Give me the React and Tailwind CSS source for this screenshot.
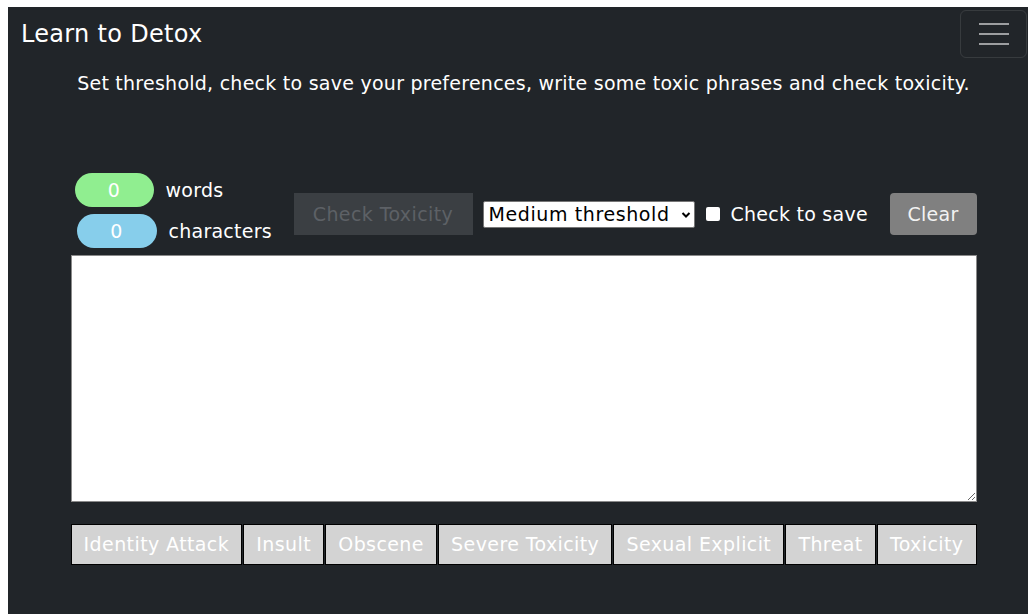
import { useState } from 'react';

// Detox trainer: navbar, counters + controls row, text area and the
// category tags underneath.

const CATEGORIES = [
  'Identity Attack',
  'Insult',
  'Obscene',
  'Severe Toxicity',
  'Sexual Explicit',
  'Threat',
  'Toxicity',
];

export default function App() {
  const [text, setText] = useState('');
  const [threshold, setThreshold] = useState('medium');
  const [save, setSave] = useState(false);

  const words = text.trim() ? text.trim().split(/\s+/).length : 0;

  return (
    <div className="h-[614px] w-[1028px] overflow-hidden bg-white pl-[8px] pt-[7px]">
      <div
        className="h-[700px] w-[1031px] bg-[#212529] tracking-[0.25px] text-white"
        style={{ fontFamily: '"DejaVu Sans", "Open Sans", sans-serif' }}
      >
        <nav className="flex items-center justify-between py-[3px] pl-[13px] pr-[12px]">
          <span className="text-[24px] leading-[32px] tracking-[0.3px]">Learn to Detox</span>
          <button className="flex h-[48px] w-[67px] items-center justify-center rounded-[6px] border border-white/10">
            <svg width="30" height="22" viewBox="0 0 30 22">
              <path d="M0 1h30M0 11h30M0 21h30" stroke="#9c9ea0" strokeWidth="2" />
            </svg>
          </button>
        </nav>

        <p className="mt-[9px] text-center text-[19px] leading-[27px]">
          Set threshold, check to save your preferences, write some toxic phrases and check toxicity.
        </p>

        <div className="mx-auto mt-[76px] w-[906px]">
          <div className="flex items-start">
            <div className="flex w-[223px] flex-col gap-[7px] text-[19px]">
              <div className="flex items-center">
                <span className="ml-[4px] flex h-[34px] w-[79px] items-center justify-center rounded-full bg-[#90ee90]">
                  {words}
                </span>
                <span className="ml-[12px]">words</span>
              </div>
              <div className="flex items-center">
                <span className="ml-[6px] flex h-[34px] w-[80px] items-center justify-center rounded-full bg-[#87ceeb]">
                  {text.length}
                </span>
                <span className="ml-[12px]">characters</span>
              </div>
            </div>

            <div className="mt-[20px] flex flex-1 items-center">
              <button
                disabled
                className="h-[42px] w-[179px] bg-[#3b3f43] text-[19px] tracking-[0.4px] text-[#5d6166]"
              >
                Check Toxicity
              </button>
              <div className="relative ml-[10px] h-[27px] w-[212px]">
                <select
                  value={threshold}
                  onChange={(e) => setThreshold(e.target.value)}
                  className="h-full w-full appearance-none rounded-[2px] border border-[#767676] bg-white pl-[5px] text-[19px] leading-[25px] tracking-[0.6px] text-black outline-none"
                >
                  <option value="low">Low threshold</option>
                  <option value="medium">Medium threshold</option>
                  <option value="high">High threshold</option>
                </select>
                <svg
                  className="pointer-events-none absolute right-[4px] top-[10px]"
                  width="10"
                  height="8"
                  viewBox="0 0 10 8"
                >
                  <path d="M1.5 2l3.5 3.5L8.5 2" fill="none" stroke="#000" strokeWidth="2" />
                </svg>
              </div>
              <label className="ml-[11px] flex items-center text-[19px]">
                <input
                  type="checkbox"
                  checked={save}
                  onChange={(e) => setSave(e.target.checked)}
                  className="h-[14px] w-[14px] appearance-none rounded-[2px] bg-white checked:bg-[#0d6efd]"
                />
                <span className="ml-[11px]">Check to save</span>
              </label>
              <button
                onClick={() => setText('')}
                className="ml-auto h-[42px] w-[87px] rounded-[4px] bg-[#808080] text-[19px] text-[#f2f2f2]"
              >
                Clear
              </button>
            </div>
          </div>

          <textarea
            value={text}
            onChange={(e) => setText(e.target.value)}
            className="mt-[7px] block h-[247px] w-full border border-[#8a8a8a] bg-white p-[4px] text-black outline-none"
          />

          <div className="mt-[22px] flex gap-[1px]">
            {CATEGORIES.map((c) => (
              <button
                key={c}
                className="h-[41px] flex-auto border border-black bg-[#d3d3d3] px-[12px] text-[19px] tracking-[0.4px] text-white"
              >
                {c}
              </button>
            ))}
          </div>
        </div>
      </div>
    </div>
  );
}
